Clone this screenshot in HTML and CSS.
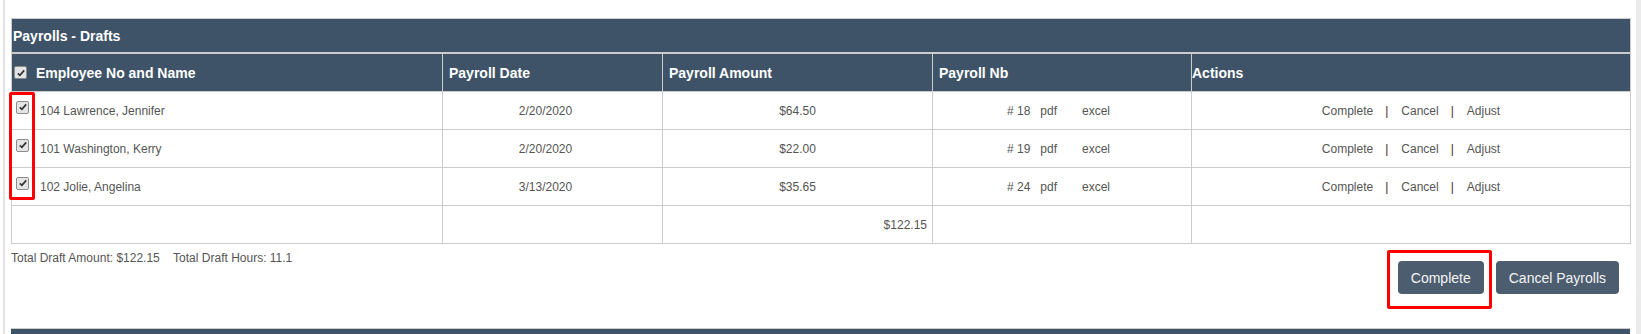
FILE: index.html
```html
<!DOCTYPE html>
<html lang="en">
<head>
  <meta charset="UTF-8">
  <title>Payrolls - Drafts</title>
  <link rel="stylesheet" href="styles.css">
</head>
<body>
  <div class="page">
    <div class="grid-wrap">
      <table class="payrolls">
        <colgroup>
          <col style="width:431px">
          <col style="width:220px">
          <col style="width:270px">
          <col style="width:259px">
          <col style="width:439px">
        </colgroup>
        <thead>
          <tr>
            <th class="title" colspan="5">Payrolls - Drafts</th>
          </tr>
          <tr class="head">
            <th class="name-col"><input type="checkbox" class="all-check" checked>Employee No and Name</th>
            <th>Payroll Date</th>
            <th>Payroll Amount</th>
            <th>Payroll Nb</th>
            <th class="actions-col">Actions</th>
          </tr>
        </thead>
        <tbody>
          <tr>
            <td class="name"><input type="checkbox" checked>104 Lawrence, Jennifer</td>
            <td class="date">2/20/2020</td>
            <td class="amount">$64.50</td>
            <td class="nb"><span># 18</span><a class="file">pdf</a><a class="file excel">excel</a></td>
            <td class="actions"><a>Complete</a><span class="sep">|</span><a>Cancel</a><span class="sep">|</span><a>Adjust</a></td>
          </tr>
          <tr>
            <td class="name"><input type="checkbox" checked>101 Washington, Kerry</td>
            <td class="date">2/20/2020</td>
            <td class="amount">$22.00</td>
            <td class="nb"><span># 19</span><a class="file">pdf</a><a class="file excel">excel</a></td>
            <td class="actions"><a>Complete</a><span class="sep">|</span><a>Cancel</a><span class="sep">|</span><a>Adjust</a></td>
          </tr>
          <tr>
            <td class="name"><input type="checkbox" checked>102 Jolie, Angelina</td>
            <td class="date">3/13/2020</td>
            <td class="amount">$35.65</td>
            <td class="nb"><span># 24</span><a class="file">pdf</a><a class="file excel">excel</a></td>
            <td class="actions"><a>Complete</a><span class="sep">|</span><a>Cancel</a><span class="sep">|</span><a>Adjust</a></td>
          </tr>
          <tr class="total-row">
            <td></td>
            <td></td>
            <td class="total">$122.15</td>
            <td></td>
            <td></td>
          </tr>
        </tbody>
      </table>
      <div class="mark mark-checks"></div>
    </div>

    <div class="summary">
      <div class="totals">
        <span>Total Draft Amount: $122.15</span>
        <span class="hours">Total Draft Hours: 11.1</span>
      </div>
      <div class="buttons">
        <span class="highlight"><button>Complete</button></span>
        <button>Cancel Payrolls</button>
      </div>
    </div>

    <div class="next-panel"></div>
  </div>
</body>
</html>
```

FILE: styles.css
```css
html, body {
  margin: 0;
  padding: 0;
  overflow: hidden;
  background: #fff;
}
body {
  font-family: "Liberation Sans", Arial, sans-serif;
  font-size: 12px;
  color: #555;
}
.page {
  margin-left: 3px;
  border-left: 2px solid #e3e3e3;
  border-right: 5px solid #ebebeb;
  padding: 18px 6px 0 6px;
  height: 334px;
  box-sizing: border-box;
}
.grid-wrap {
  position: relative;
}
.payrolls {
  width: 1619px;
  table-layout: fixed;
  border-collapse: collapse;
  border: 1px solid #ccc;
}
.payrolls th {
  background: #3e5368;
  color: #fff;
  font-weight: bold;
  text-align: left;
  border: 1px solid #ccc;
}
.payrolls th.title {
  height: 33px;
  padding: 0 1px;
  font-size: 14px;
  border-bottom: 2px solid #ccc;
}
.head th {
  height: 36px;
  padding: 1px 0 0 6px;
  font-size: 14px;
}
.head th.name-col {
  padding-left: 1px;
}
.head th.actions-col {
  padding-left: 0;
}
input[type="checkbox"] {
  appearance: none;
  -webkit-appearance: none;
  box-sizing: border-box;
  width: 13px;
  height: 13px;
  border: 1px solid #8c8c8c;
  border-radius: 2px;
  background: #e4e4e4 url("data:image/svg+xml,%3Csvg xmlns='http://www.w3.org/2000/svg' viewBox='0 0 11 11'%3E%3Cpath d='M2 5.8 L4.3 8 L9 2.6' fill='none' stroke='%23333' stroke-width='1.9'/%3E%3C/svg%3E") center / 10px 10px no-repeat;
}
.all-check {
  width: 11px;
  height: 11px;
  margin: 0 9px 0 1px;
  vertical-align: -1px;
}
.payrolls td {
  height: 37px;
  padding: 0;
  border: 1px solid #ccc;
  white-space: nowrap;
}
.payrolls td.name input {
  margin: -4px 11px 0 4px;
  vertical-align: 1px;
}
td.date {
  text-align: center;
  padding-right: 14px;
}
td.amount {
  text-align: center;
}
td.total {
  text-align: right;
  padding-right: 5px;
}
td.nb {
  text-align: center;
  padding-right: 7px;
}
td.nb .file {
  margin-left: 10px;
}
td.nb .excel {
  margin-left: 25px;
}
td.actions {
  text-align: center;
}
td.actions .sep {
  margin: 0 13px 0 12px;
  color: #4a1f1f;
}
.summary {
  display: flex;
  justify-content: space-between;
  align-items: flex-start;
  height: 84px;
}
.totals {
  margin-top: 7px;
}
.totals .hours {
  margin-left: 10px;
}
.buttons {
  display: flex;
  gap: 12px;
  margin-top: 17px;
  margin-right: 11px;
}
.buttons button {
  height: 33px;
  padding: 0 13px;
  background: #4b5d6f;
  color: #f4f4f4;
  border: none;
  border-radius: 4px;
  font-family: "Liberation Sans", Arial, sans-serif;
  font-size: 14px;
  cursor: pointer;
}
.highlight {
  position: relative;
  display: inline-block;
}
.highlight::after {
  content: "";
  position: absolute;
  top: -11px;
  left: -11px;
  right: -8px;
  bottom: -15px;
  border: 3px solid #f00;
  border-radius: 2px;
}
.mark {
  position: absolute;
  border: 3px solid #f00;
  border-radius: 2px;
}
.mark-checks {
  left: -2px;
  top: 74px;
  width: 20px;
  height: 102px;
}
.next-panel {
  width: 1619px;
  height: 20px;
  background: #3e5368;
  border-top: 1px solid #ccc;
}
```
